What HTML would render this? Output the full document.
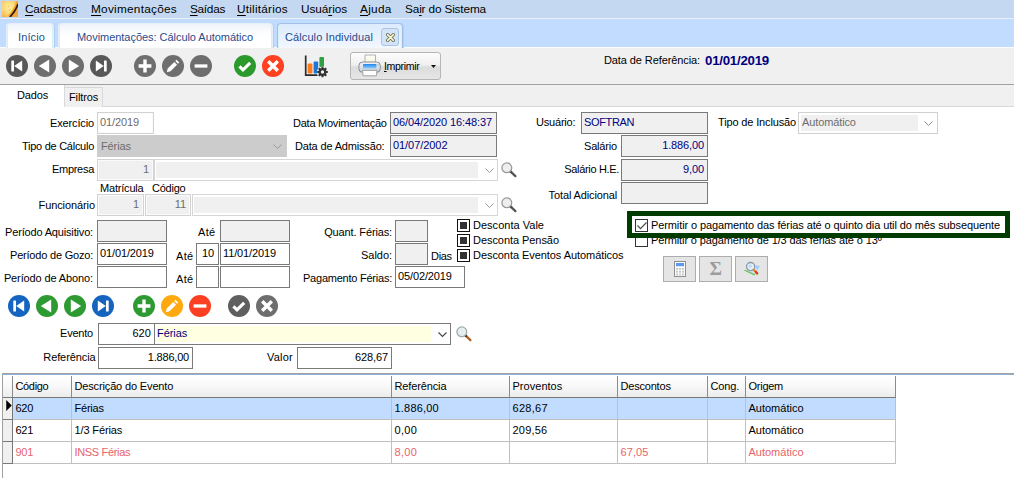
<!DOCTYPE html><html lang="pt-BR"><head><meta charset="utf-8"><title>Cálculo Individual</title><style>
*{box-sizing:border-box;margin:0;padding:0}
html,body{width:1014px;height:478px;overflow:hidden;background:#fff}
body{position:relative;font-family:"Liberation Sans",sans-serif;font-size:11px;color:#000}
.a{position:absolute;white-space:nowrap}
.l{position:absolute;white-space:nowrap;line-height:13px;height:13px}
.r{text-align:right}
.f{position:absolute;border:1px solid #7a7a7a;background:#f0f0f0;white-space:nowrap;line-height:13px;padding:3px 2px 0 2px;overflow:hidden}
.w{background:#fff}
.nv{color:#00007f}
.lt{border-color:#d2d2d2;box-shadow:inset 0 0 0 1px #fbfbfb}
.g{color:#6d6d6d}
.num{text-align:right;padding-right:4px}
.m{position:absolute;top:1px;height:18px;line-height:17px;font-size:11.8px;white-space:nowrap}
.m u{text-decoration-thickness:1px;text-underline-offset:1.5px}
.tab{position:absolute;top:23px;height:25px;border:1px solid #e6eef8;border-bottom:none;border-radius:4px 4px 0 0;background:linear-gradient(#eff3f9,#fbfcfe 35%,#fff 60%);box-shadow:inset 2px 0 0 -1px #d4f1fa,inset -2px 0 0 -1px #d4f1fa,1px 0 0 #b3cef5;color:#2a4a8a;font-size:11px;line-height:27px;white-space:nowrap}
.tab span{position:absolute;top:0}
.cb{position:absolute;width:13px;height:13px;border:1px solid #111;background:#fff}
.cb i{position:absolute;left:2px;top:2px;width:7px;height:7px;background:#333}
.btn{position:absolute;width:33px;height:26px;top:256px;background:#e5e5e5;border:1px solid #adadad}
.gh{position:absolute;top:376px;height:22px;border-right:1px solid #8c8c8c;border-bottom:1px solid #787878;background:linear-gradient(#fff,#f8f8f8 50%,#ececec);line-height:20px;padding-left:2.5px;font-size:11px;white-space:nowrap}
.gc{position:absolute;height:22px;border-right:1px solid #c0c0c0;border-bottom:1px solid #c0c0c0;line-height:20px;padding-left:2.5px;font-size:11px;white-space:nowrap}
.sel{background:#c1dcff}
.red{color:#e8636a}
.ind{position:absolute;left:3px;width:10px;height:22px;background:#f0f0f0;border-right:1px solid #787878;border-bottom:1px solid #787878}
svg{position:absolute;overflow:visible}
</style></head><body>
<div class="a" style="left:0;top:0;width:1014px;height:18px;background:#c4d9f1"></div>
<div class="a" style="left:0;top:18px;width:1014px;height:1px;background:#ebeff4"></div>
<div class="a" style="left:0;top:19px;width:1014px;height:28px;background:#c1dcff"></div>
<div class="a" style="left:0;top:47px;width:1014px;height:1px;background:#fbfdff"></div>
<svg style="left:2px;top:1px;overflow:hidden" width="16" height="16" viewBox="0 0 16 16"><defs><radialGradient id="ig" cx=".45" cy=".4" r=".75"><stop offset="0" stop-color="#fdf29c"/><stop offset=".55" stop-color="#fbd575"/><stop offset="1" stop-color="#f5aa45"/></radialGradient></defs><rect width="16" height="16" fill="url(#ig)"/><path d="M16 2C14 8 11.5 12 9 16h7z" fill="#f3a63a"/><path d="M15.8 .5C14.5 6.5 11 11.5 7.3 16" stroke="#f0a22c" stroke-width="3.4" fill="none"/><path d="M16 3C14.6 7.6 11.6 12 8 16" stroke="#2b1c0a" stroke-width="1.7" fill="none"/><circle cx="6.5" cy="5.5" r=".7" fill="#eeb45a"/><circle cx="7.5" cy="9" r=".8" fill="#f2b868"/><circle cx="2.5" cy="10.5" r=".7" fill="#f2b868"/></svg>
<div class="m" style="left:25px"><span id="m0" style="letter-spacing:-0.198px"><u>C</u>adastros</span></div>
<div class="m" style="left:91px"><span id="m1" style="letter-spacing:0.260px"><u>M</u>ovimentações</span></div>
<div class="m" style="left:190px"><span id="m2" style="letter-spacing:-0.289px"><u>S</u>aídas</span></div>
<div class="m" style="left:237px"><span id="m3" style="letter-spacing:0.224px"><u>U</u>tilitários</span></div>
<div class="m" style="left:301px"><span id="m4" style="letter-spacing:-0.072px">Usuá<u>r</u>ios</span></div>
<div class="m" style="left:360px"><span id="m5" style="letter-spacing:0.300px"><u>A</u>juda</span></div>
<div class="m" style="left:405px"><span id="m6" style="letter-spacing:-0.153px">Sa<u>i</u>r do Sistema</span></div>
<div class="tab" style="left:6px;width:48px"><span id="t0" style="left:11px;letter-spacing:0.117px">Início</span></div>
<div class="tab" style="left:58px;width:215px"><span id="t1" style="left:18px;letter-spacing:-0.040px">Movimentações: Cálculo Automático</span></div>
<div class="tab" style="left:277px;width:125.5px;background:linear-gradient(#dcebfd,#e9f2fd 60%,#f4f8fe);border-color:#9ebfe8"><span id="t2" style="left:7px;letter-spacing:0.099px">Cálculo Individual</span><div class="a" style="left:103px;top:4px;width:18px;height:18px;border:1px solid #a9c4e6;border-radius:3px;background:#d3e3f8"></div><svg style="left:107.5px;top:8.5px" width="9" height="9" viewBox="0 0 10 10"><path d="M1.8 1.8l6.4 6.4M8.2 1.8l-6.4 6.4" stroke="#66663c" stroke-width="3.6" stroke-linecap="round"/><path d="M1.8 1.8l6.4 6.4M8.2 1.8l-6.4 6.4" stroke="#fffbe0" stroke-width="1.7" stroke-linecap="round"/></svg></div>
<div class="a" style="left:0;top:48px;width:1014px;height:36px;background:#f0f0f0"></div>
<div class="a" style="left:0;top:84px;width:1014px;height:1px;background:#a0a0a0"></div>
<div class="a" style="left:0;top:85px;width:1014px;height:21px;background:#f0f0f0"></div>
<div class="a" style="left:64px;top:106px;width:950px;height:1px;background:#d9d9d9"></div>
<svg style="left:6px;top:54.75px" width="22" height="22" viewBox="-11 -11 22 22"><circle r="11" fill="#585858"/><rect x="-5.7" y="-5.5" width="2.7" height="11" rx=".5" fill="#fff"/><path d="M5.2 -5.6v11.2L-2.8 0z" fill="#fff"/></svg>
<svg style="left:34px;top:54.75px" width="22" height="22" viewBox="-11 -11 22 22"><circle r="11" fill="#6e6e6e"/><path d="M4.2 -6.4v12.8L-6.2 0z" fill="#fff"/></svg>
<svg style="left:62px;top:54.75px" width="22" height="22" viewBox="-11 -11 22 22"><circle r="11" fill="#6e6e6e"/><path d="M-4.2 -6.4v12.8L6.2 0z" fill="#fff"/></svg>
<svg style="left:90px;top:54.75px" width="22" height="22" viewBox="-11 -11 22 22"><circle r="11" fill="#585858"/><rect x="3" y="-5.5" width="2.7" height="11" rx=".5" fill="#fff"/><path d="M-5.2 -5.6v11.2L2.8 0z" fill="#fff"/></svg>
<svg style="left:134px;top:54.75px" width="22" height="22" viewBox="-11 -11 22 22"><circle r="11" fill="#6e6e6e"/><path d="M-6.4 0h12.8M0 -6.4v12.8" stroke="#fff" stroke-width="3.4"/></svg>
<svg style="left:162px;top:54.75px" width="22" height="22" viewBox="-11 -11 22 22"><circle r="11" fill="#6e6e6e"/><path d="M-6.2 6.2l.9-3.7 6.6-6.6 2.8 2.8-6.6 6.6z M2.2 -5l1.3-1.3 2.8 2.8-1.3 1.3z" fill="#fff"/></svg>
<svg style="left:190px;top:54.75px" width="22" height="22" viewBox="-11 -11 22 22"><circle r="11" fill="#6e6e6e"/><path d="M-6.4 0h12.8" stroke="#fff" stroke-width="3.3"/></svg>
<svg style="left:234px;top:54.75px" width="22" height="22" viewBox="-11 -11 22 22"><circle r="11" fill="#2c992c"/><path d="M-5.6 0.3l3.6 3.5 7.2-7" stroke="#fff" stroke-width="3.1" fill="none" stroke-linejoin="miter"/></svg>
<svg style="left:262px;top:54.75px" width="22" height="22" viewBox="-11 -11 22 22"><circle r="11" fill="#ff4021"/><path d="M-4.8 -4.8l9.6 9.6M4.8 -4.8l-9.6 9.6" stroke="#fff" stroke-width="3.4"/></svg>
<svg style="left:304px;top:55px" width="24" height="23" viewBox="0 0 24 23"><path d="M1.7 .6v19.6H13.5" stroke="#2b2b2b" stroke-width="1.7" fill="none"/><rect x="3.6" y="8.6" width="4.8" height="10" rx="1" fill="#ff7a1a"/><rect x="9.6" y="6.6" width="4.6" height="12" rx="1" fill="#1f74d6"/><rect x="15.4" y="2" width="4.6" height="10" rx="1" fill="#2ea043"/><circle cx="18.5" cy="17" r="5.6" fill="#f0f0f0"/><circle cx="18.5" cy="17" r="3.9" fill="#333"/><path d="M18.5 11.7v10.6M13.2 17h10.6M14.75 13.25l7.5 7.5M22.25 13.25l-7.5 7.5" stroke="#333" stroke-width="2"/><circle cx="18.5" cy="17" r="1.7" fill="#f0f0f0"/></svg>
<div class="a" style="left:350px;top:52px;width:91px;height:28px;border:1px solid #b5b5b5;border-radius:3px;background:linear-gradient(#fdfdfd,#f0f0f0 45%,#dcdcdc 55%,#e6e6e6)"></div>
<svg style="left:358px;top:54px" width="23" height="23" viewBox="0 0 23 23"><defs><linearGradient id="pb" x1="0" y1="0" x2="0" y2="1"><stop offset="0" stop-color="#f4f6f9"/><stop offset="1" stop-color="#c3c9d2"/></linearGradient><linearGradient id="pl" x1="0" y1="0" x2="0" y2="1"><stop offset="0" stop-color="#2484ee"/><stop offset="1" stop-color="#8fd0fb"/></linearGradient><linearGradient id="pp" x1="0" y1="0" x2="0" y2="1"><stop offset="0" stop-color="#ffffff"/><stop offset="1" stop-color="#f3f1d2"/></linearGradient></defs><path d="M7 1h10.5v9H7z" fill="url(#pp)" stroke="#a9a9a0" stroke-width=".9"/><rect x=".9" y="8" width="21.4" height="10.4" rx="3.8" fill="url(#pb)" stroke="#868d97" stroke-width="1"/><rect x="5" y="10" width="13.4" height="4.6" rx=".6" fill="url(#pl)"/><path d="M4.4 16.4h14.6l-.7 5.4H5.1z" fill="#fdfdfd" stroke="#9c9c9c" stroke-width=".9"/><circle cx="20" cy="11" r=".7" fill="#7fbf6a"/></svg>
<div class="l" style="left:384px;top:60px;font-size:10.6px"><span id="imp" style="letter-spacing:-0.350px"><u>I</u>mprimir</span></div>
<svg style="left:431px;top:64.5px" width="5" height="3" viewBox="0 0 7 4"><path d="M0 0h7L3.5 4z" fill="#111"/></svg>
<div class="l" style="left:604px;top:54px"><span id="dref" style="letter-spacing:-0.097px">Data de Referência:</span></div>
<div class="l" style="left:705px;top:53px;font-weight:bold;font-size:13.3px;color:#00007f;line-height:15px;height:15px"><span id="drefv" style="letter-spacing:-0.256px">01/01/2019</span></div>
<div class="a" style="left:0;top:85px;width:65px;height:22px;background:#fff;border-right:1px solid #d9d9d9"></div>
<div class="l" style="left:17px;top:89px"><span id="dados" style="letter-spacing:-0.120px">Dados</span></div>
<div class="a" style="left:65px;top:87px;width:38px;height:20px;background:#f0f0f0;border:1px solid #d9d9d9;border-left:none;border-bottom:none"></div>
<div class="l" style="left:69px;top:91px"><span id="filtros" style="letter-spacing:-0.120px">Filtros</span></div>
<div class="l r" style="right:920px;top:117px;"><span id="l1" style="letter-spacing:-0.139px">Exercício</span></div>
<div class="f w lt g" style="left:97px;top:112px;width:57px;height:22px;"><span id="fx1" style="letter-spacing:-0.109px">01/2019</span></div>
<div class="l r" style="right:920px;top:140px;"><span id="l2" style="letter-spacing:-0.269px">Tipo de Cálculo</span></div>
<div class="f g" style="left:97px;top:135px;width:190px;height:22px;background:#cccccc;border-color:#cccccc;padding-top:4px;padding-left:3px"><span id="fx2" style="letter-spacing:-0.120px">Férias</span></div>
<svg style="left:273px;top:144px" width="9" height="5" viewBox="0 0 9 5"><path d="M.5 .5l4 4 4-4" stroke="#9a9a9a" fill="none" stroke-width="1"/></svg>
<div class="l r" style="right:920px;top:163px;"><span id="l3" style="letter-spacing:-0.290px">Empresa</span></div>
<div class="f lt g num" style="left:97px;top:159px;width:57px;height:22px;padding-top:3px"><span id="fx3" style="letter-spacing:-0.120px">1</span></div>
<div class="a" style="left:154px;top:159px;width:344px;height:22px;border:1px solid #d6d6d6;background:#fff"></div>
<div class="a" style="left:156px;top:162px;width:322px;height:16px;background:#f0f0f0"></div>
<svg style="left:485px;top:168px" width="9" height="5" viewBox="0 0 9 5"><path d="M.5 .5l4 4 4-4" stroke="#999" fill="none" stroke-width="1"/></svg>
<svg style="left:501px;top:162px" width="16" height="16" viewBox="0 0 16 16"><path d="M9.4 9.4l5 4.7" stroke="#555" stroke-width="2.3" stroke-linecap="round"/><path d="M9 9l1.6 1.5" stroke="#444" stroke-width="2.3"/><circle cx="5.8" cy="5.8" r="4.9" fill="#eeeeee" stroke="#9a9a9a" stroke-width="1.3"/></svg>
<div class="l" style="left:100px;top:182px;"><span id="l4" style="letter-spacing:-0.194px">Matrícula</span></div>
<div class="l" style="left:152px;top:182px;"><span id="l5" style="letter-spacing:-0.227px">Código</span></div>
<div class="l r" style="right:919px;top:199px;"><span id="l6" style="letter-spacing:-0.089px">Funcionário</span></div>
<div class="f lt g num" style="left:97px;top:194px;width:47px;height:22px;padding-top:3px"><span id="fx4" style="letter-spacing:-0.120px">1</span></div>
<div class="f lt g num" style="left:145px;top:194px;width:46px;height:22px;padding-top:3px"><span id="fx5" style="letter-spacing:-0.120px">11</span></div>
<div class="a" style="left:192px;top:194px;width:306px;height:22px;border:1px solid #d6d6d6;background:#fff"></div>
<div class="a" style="left:194px;top:197px;width:284px;height:16px;background:#f0f0f0"></div>
<svg style="left:485px;top:203px" width="9" height="5" viewBox="0 0 9 5"><path d="M.5 .5l4 4 4-4" stroke="#999" fill="none" stroke-width="1"/></svg>
<svg style="left:501px;top:197px" width="16" height="16" viewBox="0 0 16 16"><path d="M9.4 9.4l5 4.7" stroke="#555" stroke-width="2.3" stroke-linecap="round"/><path d="M9 9l1.6 1.5" stroke="#444" stroke-width="2.3"/><circle cx="5.8" cy="5.8" r="4.9" fill="#eeeeee" stroke="#9a9a9a" stroke-width="1.3"/></svg>
<div class="l r" style="right:921px;top:226px;"><span id="l7" style="letter-spacing:-0.164px">Período Aquisitivo:</span></div>
<div class="f " style="left:97px;top:220px;width:70px;height:22px;"></div>
<div class="l" style="left:198px;top:226px;"><span id="l8" style="letter-spacing:0.300px">Até</span></div>
<div class="f " style="left:220px;top:220px;width:70px;height:22px;"></div>
<div class="l r" style="right:921px;top:249px;"><span id="l9" style="letter-spacing:-0.202px">Período de Gozo:</span></div>
<div class="f w" style="left:97px;top:243px;width:70px;height:22px;"><span id="fx6" style="letter-spacing:-0.120px">01/01/2019</span></div>
<div class="l" style="left:176px;top:250px;"><span id="l10" style="letter-spacing:0.300px">Até</span></div>
<div class="f w" style="left:196px;top:243px;width:23px;height:22px;text-align:right;padding-right:4px"><span id="fx7" style="letter-spacing:-0.120px">10</span></div>
<div class="f w" style="left:220px;top:243px;width:70px;height:22px;"><span id="fx8" style="letter-spacing:-0.120px">11/01/2019</span></div>
<div class="l r" style="right:921px;top:272px;"><span id="l11" style="letter-spacing:-0.120px">Período de Abono:</span></div>
<div class="f w" style="left:97px;top:266px;width:70px;height:22px;"></div>
<div class="l" style="left:176px;top:273px;"><span id="l12" style="letter-spacing:0.300px">Até</span></div>
<div class="f w" style="left:196px;top:266px;width:23px;height:22px;"></div>
<div class="f w" style="left:220px;top:266px;width:70px;height:22px;"></div>
<div class="l" style="left:293px;top:117px;"><span id="l13" style="letter-spacing:-0.243px">Data Movimentação</span></div>
<div class="f nv" style="left:390px;top:112px;width:107px;height:22px;"><span id="fx9" style="letter-spacing:-0.102px">06/04/2020 16:48:37</span></div>
<div class="l" style="left:295px;top:140px;"><span id="l14" style="letter-spacing:-0.167px">Data de Admissão:</span></div>
<div class="f nv" style="left:390px;top:135px;width:107px;height:22px;"><span id="fx10" style="letter-spacing:-0.056px">01/07/2002</span></div>
<div class="l r" style="right:622px;top:226px;"><span id="l15" style="letter-spacing:-0.136px">Quant. Férias:</span></div>
<div class="f " style="left:395px;top:220px;width:33px;height:22px;"></div>
<div class="l r" style="right:622px;top:249px;"><span id="l16" style="letter-spacing:-0.034px">Saldo:</span></div>
<div class="f " style="left:395px;top:243px;width:33px;height:22px;"></div>
<div class="l" style="left:431px;top:250px;"><span id="l17" style="letter-spacing:-0.304px">Dias</span></div>
<div class="l r" style="right:622px;top:272px;"><span id="l18" style="letter-spacing:-0.232px">Pagamento Férias:</span></div>
<div class="f w" style="left:395px;top:266px;width:70px;height:22px;"><span id="fx11" style="letter-spacing:-0.120px">05/02/2019</span></div>
<div class="cb" style="left:457px;top:219px"><i></i></div>
<div class="l" style="left:473px;top:219px;"><span id="c0" style="letter-spacing:0.020px">Desconta Vale</span></div>
<div class="cb" style="left:457px;top:234px"><i></i></div>
<div class="l" style="left:473px;top:234px;"><span id="c1" style="letter-spacing:-0.056px">Desconta Pensão</span></div>
<div class="cb" style="left:457px;top:249px"><i></i></div>
<div class="l" style="left:473px;top:249px;"><span id="c2" style="letter-spacing:-0.062px">Desconta Eventos Automáticos</span></div>
<div class="l" style="left:536px;top:116px;"><span id="l19" style="letter-spacing:-0.196px">Usuário:</span></div>
<div class="f nv" style="left:581px;top:112px;width:127px;height:22px;"><span id="fx12" style="letter-spacing:-0.350px">SOFTRAN</span></div>
<div class="l r" style="right:397px;top:140px;"><span id="l20" style="letter-spacing:-0.179px">Salário</span></div>
<div class="f nv" style="left:621px;top:135px;width:87px;height:22px;text-align:right;padding-right:3px;padding-top:3px"><span id="fx13" style="letter-spacing:-0.120px">1.886,00</span></div>
<div class="l r" style="right:395px;top:163px;"><span id="l21" style="letter-spacing:-0.334px">Salário H.E.</span></div>
<div class="f nv" style="left:621px;top:159px;width:87px;height:22px;text-align:right;padding-right:3px;padding-top:3px"><span id="fx14" style="letter-spacing:-0.120px">9,00</span></div>
<div class="l r" style="right:397px;top:189px;"><span id="l22" style="letter-spacing:-0.129px">Total Adicional</span></div>
<div class="f " style="left:621px;top:182px;width:87px;height:22px;"></div>
<div class="l" style="left:718px;top:116px;"><span id="l23" style="letter-spacing:-0.145px">Tipo de Inclusão</span></div>
<div class="a" style="left:798px;top:112px;width:140px;height:22px;border:1px solid #d0d0d0;background:#fff"></div>
<div class="a g" style="left:801px;top:115px;width:117px;height:16px;background:#f0f0f0;line-height:14px;padding-left:1px"><span id="fx15" style="letter-spacing:-0.120px">Automático</span></div>
<svg style="left:924px;top:121px" width="9" height="5" viewBox="0 0 9 5"><path d="M.5 .5l4 4 4-4" stroke="#8a8a8a" fill="none" stroke-width="1"/></svg>
<div class="cb" style="left:635px;top:234px;border-color:#333"></div>
<div class="l" style="left:651px;top:234px;"><span id="p2" style="letter-spacing:-0.120px">Permitir o pagamento de 1/3 das férias até o 13º</span></div>
<div class="a" style="left:627px;top:211px;width:383px;height:27px;border:5px solid #003c00;background:#fff"></div>
<div class="cb" style="left:635px;top:219px;border-color:#333"></div>
<svg style="left:637px;top:222px" width="10" height="8" viewBox="0 0 10 8"><path d="M.5 3.5l3 3.2 6-6.2" stroke="#4a4a4a" stroke-width="1.2" fill="none"/></svg>
<div class="l" style="left:651px;top:219px;"><span id="p1" style="letter-spacing:-0.104px">Permitir o pagamento das férias até o quinto dia util do mês subsequente</span></div>
<div class="btn" style="left:663px"></div>
<div class="btn" style="left:699px"></div>
<div class="btn" style="left:735px"></div>
<svg style="left:674px;top:261px" width="12" height="16" viewBox="0 0 12 16"><rect x=".5" y=".5" width="11" height="15" fill="#fafafa" stroke="#8f8f8f"/><rect x="2" y="2" width="8" height="3.2" fill="#5b9bea"/><g fill="#c4c4c4"><rect x="2.2" y="7" width="1.8" height="1.8"/><rect x="5.1" y="7" width="1.8" height="1.8"/><rect x="8" y="7" width="1.8" height="1.8"/><rect x="2.2" y="9.8" width="1.8" height="1.8"/><rect x="5.1" y="9.8" width="1.8" height="1.8"/><rect x="8" y="9.8" width="1.8" height="1.8"/><rect x="2.2" y="12.6" width="1.8" height="1.8"/><rect x="5.1" y="12.6" width="1.8" height="1.8"/><rect x="8" y="12.6" width="1.8" height="1.8"/></g></svg>
<div class="a" style="left:709.5px;top:259px;font-family:'Liberation Serif',serif;font-weight:bold;font-size:19px;line-height:20px;color:#9c9c9c">Σ</div>
<svg style="left:743px;top:261px" width="18" height="16" viewBox="0 0 18 16"><path d="M1 9.5L8 3.5l9 1.5-5.5 9.5z" fill="#cfe4f7"/><path d="M1 9.5l10.5 5 .6-1.2L1.8 8.8z" fill="#6cc04a"/><path d="M12.2 4.2L17 5l-3 5z" fill="#a9cdf0"/><circle cx="7.6" cy="5.6" r="4.1" fill="#e6f0f8" stroke="#8a9aa8" stroke-width="1.3"/><circle cx="7.2" cy="5.2" r="1.6" fill="#bcd8ee"/><path d="M10.6 8.8l3.6 3.6" stroke="#e8861f" stroke-width="2.2" stroke-linecap="round"/><path d="M12.6 10.8l1.6 1.6" stroke="#d8402a" stroke-width="2.2" stroke-linecap="round"/></svg>
<svg style="left:8px;top:294.75px" width="22" height="22" viewBox="-11 -11 22 22"><circle r="11" fill="#1565c0"/><rect x="-5.7" y="-5.5" width="2.7" height="11" rx=".5" fill="#fff"/><path d="M5.2 -5.6v11.2L-2.8 0z" fill="#fff"/></svg>
<svg style="left:36px;top:294.75px" width="22" height="22" viewBox="-11 -11 22 22"><circle r="11" fill="#2e9b32"/><path d="M4.2 -6.4v12.8L-6.2 0z" fill="#fff"/></svg>
<svg style="left:64px;top:294.75px" width="22" height="22" viewBox="-11 -11 22 22"><circle r="11" fill="#2e9b32"/><path d="M-4.2 -6.4v12.8L6.2 0z" fill="#fff"/></svg>
<svg style="left:92px;top:294.75px" width="22" height="22" viewBox="-11 -11 22 22"><circle r="11" fill="#1565c0"/><rect x="3" y="-5.5" width="2.7" height="11" rx=".5" fill="#fff"/><path d="M-5.2 -5.6v11.2L2.8 0z" fill="#fff"/></svg>
<svg style="left:133px;top:294.75px" width="22" height="22" viewBox="-11 -11 22 22"><circle r="11" fill="#2e9b32"/><path d="M-6.4 0h12.8M0 -6.4v12.8" stroke="#fff" stroke-width="3.4"/></svg>
<svg style="left:161px;top:294.75px" width="22" height="22" viewBox="-11 -11 22 22"><circle r="11" fill="#ffa90f"/><path d="M-6.2 6.2l.9-3.7 6.6-6.6 2.8 2.8-6.6 6.6z M2.2 -5l1.3-1.3 2.8 2.8-1.3 1.3z" fill="#fff"/></svg>
<svg style="left:189px;top:294.75px" width="22" height="22" viewBox="-11 -11 22 22"><circle r="11" fill="#fb3f22"/><path d="M-6.4 0h12.8" stroke="#fff" stroke-width="3.3"/></svg>
<svg style="left:228px;top:294.75px" width="22" height="22" viewBox="-11 -11 22 22"><circle r="11" fill="#5f5f5f"/><path d="M-5.6 0.3l3.6 3.5 7.2-7" stroke="#fff" stroke-width="3.1" fill="none" stroke-linejoin="miter"/></svg>
<svg style="left:256px;top:294.75px" width="22" height="22" viewBox="-11 -11 22 22"><circle r="11" fill="#6e6e6e"/><path d="M-4.8 -4.8l9.6 9.6M4.8 -4.8l-9.6 9.6" stroke="#fff" stroke-width="3.4"/></svg>
<div class="l r" style="right:921px;top:327px;"><span id="e1" style="letter-spacing:-0.208px">Evento</span></div>
<div class="f w" style="left:98px;top:323px;width:57px;height:22px;text-align:right;padding-right:3px;padding-top:3px"><span id="fx16" style="letter-spacing:0.080px">620</span></div>
<div class="a" style="left:154px;top:323px;width:297px;height:22px;border:1px solid #7a7a7a;background:#fff"></div>
<div class="a nv" style="left:157px;top:326px;width:274px;height:16px;background:#ffffe1;line-height:15px;padding-left:0px"><span id="fx17" style="letter-spacing:-0.044px">Férias</span></div>
<svg style="left:437.5px;top:332px" width="9" height="5" viewBox="0 0 9 5"><path d="M.5 .5l4 4 4-4" stroke="#444" fill="none" stroke-width="1.1"/></svg>
<svg style="left:456px;top:326px" width="16" height="16" viewBox="0 0 16 16"><path d="M9.4 9.4l5 4.7" stroke="#b5601f" stroke-width="2.3" stroke-linecap="round"/><path d="M9 9l1.6 1.5" stroke="#3a2a1a" stroke-width="2.3"/><circle cx="5.8" cy="5.8" r="4.9" fill="#e8eef0" stroke="#9aabab" stroke-width="1.3"/></svg>
<div class="l r" style="right:918.5px;top:351px;"><span id="e2" style="letter-spacing:-0.100px">Referência</span></div>
<div class="f w" style="left:98px;top:347px;width:95px;height:22px;text-align:right;padding-right:3px;padding-top:3px"><span id="fx18" style="letter-spacing:-0.204px">1.886,00</span></div>
<div class="l" style="left:267px;top:351px;"><span id="e3" style="letter-spacing:0.225px">Valor</span></div>
<div class="f w" style="left:297px;top:347px;width:95px;height:22px;text-align:right;padding-right:3px;padding-top:3px"><span id="fx19" style="letter-spacing:-0.120px">628,67</span></div>
<div class="a" style="left:2px;top:373px;width:1012px;height:1px;background:#a0a0a0"></div>
<div class="a" style="left:2px;top:374px;width:1012px;height:1px;background:#8fb0d8"></div>
<div class="a" style="left:2px;top:375px;width:1px;height:103px;background:#a0a0a0"></div>
<div class="gh" style="left:3px;width:10px;padding:0"></div>
<div class="gh" style="left:13px;width:59px"><span id="h0" style="letter-spacing:-0.350px">Código</span></div>
<div class="gh" style="left:72px;width:320px"><span id="h1" style="letter-spacing:-0.147px">Descrição do Evento</span></div>
<div class="gh" style="left:392px;width:118px"><span id="h2" style="letter-spacing:-0.130px">Referência</span></div>
<div class="gh" style="left:510px;width:108px"><span id="h3" style="letter-spacing:0.030px">Proventos</span></div>
<div class="gh" style="left:618px;width:90px"><span id="h4" style="letter-spacing:-0.198px">Descontos</span></div>
<div class="gh" style="left:708px;width:38px"><span id="h5" style="letter-spacing:-0.112px">Cong.</span></div>
<div class="gh" style="left:746px;width:150px"><span id="h6" style="letter-spacing:-0.260px">Origem</span></div>
<div class="ind" style="top:398px"></div>
<div class="gc sel " style="left:13px;top:398px;width:59px"><span id="g0_0" style="letter-spacing:-0.286px">620</span></div>
<div class="gc sel " style="left:72px;top:398px;width:320px"><span id="g0_1" style="letter-spacing:-0.210px">Férias</span></div>
<div class="gc sel " style="left:392px;top:398px;width:118px"><span id="g0_2" style="letter-spacing:0.196px">1.886,00</span></div>
<div class="gc sel " style="left:510px;top:398px;width:108px"><span id="g0_3" style="letter-spacing:0.300px">628,67</span></div>
<div class="gc sel " style="left:618px;top:398px;width:90px"></div>
<div class="gc sel " style="left:708px;top:398px;width:38px"></div>
<div class="gc sel " style="left:746px;top:398px;width:150px"><span id="g0_6" style="letter-spacing:-0.003px">Automático</span></div>
<div class="ind" style="top:420px"></div>
<div class="gc  " style="left:13px;top:420px;width:59px"><span id="g1_0" style="letter-spacing:-0.286px">621</span></div>
<div class="gc  " style="left:72px;top:420px;width:320px"><span id="g1_1" style="letter-spacing:-0.132px">1/3 Férias</span></div>
<div class="gc  " style="left:392px;top:420px;width:118px"><span id="g1_2" style="letter-spacing:0.300px">0,00</span></div>
<div class="gc  " style="left:510px;top:420px;width:108px"><span id="g1_3" style="letter-spacing:0.207px">209,56</span></div>
<div class="gc  " style="left:618px;top:420px;width:90px"></div>
<div class="gc  " style="left:708px;top:420px;width:38px"></div>
<div class="gc  " style="left:746px;top:420px;width:150px"><span id="g1_6" style="letter-spacing:-0.003px">Automático</span></div>
<div class="ind" style="top:442px"></div>
<div class="gc  red" style="left:13px;top:442px;width:59px"><span id="g2_0" style="letter-spacing:-0.286px">901</span></div>
<div class="gc  red" style="left:72px;top:442px;width:320px"><span id="g2_1" style="letter-spacing:-0.327px">INSS Férias</span></div>
<div class="gc  red" style="left:392px;top:442px;width:118px"><span id="g2_2" style="letter-spacing:0.300px">8,00</span></div>
<div class="gc  red" style="left:510px;top:442px;width:108px"></div>
<div class="gc  red" style="left:618px;top:442px;width:90px"><span id="g2_4" style="letter-spacing:0.094px">67,05</span></div>
<div class="gc  red" style="left:708px;top:442px;width:38px"></div>
<div class="gc  red" style="left:746px;top:442px;width:150px"><span id="g2_6" style="letter-spacing:-0.003px">Automático</span></div>
<svg style="left:6px;top:399.5px" width="6" height="11" viewBox="0 0 6 12"><path d="M0 0l6 6-6 6z" fill="#000"/></svg>
</body></html>
